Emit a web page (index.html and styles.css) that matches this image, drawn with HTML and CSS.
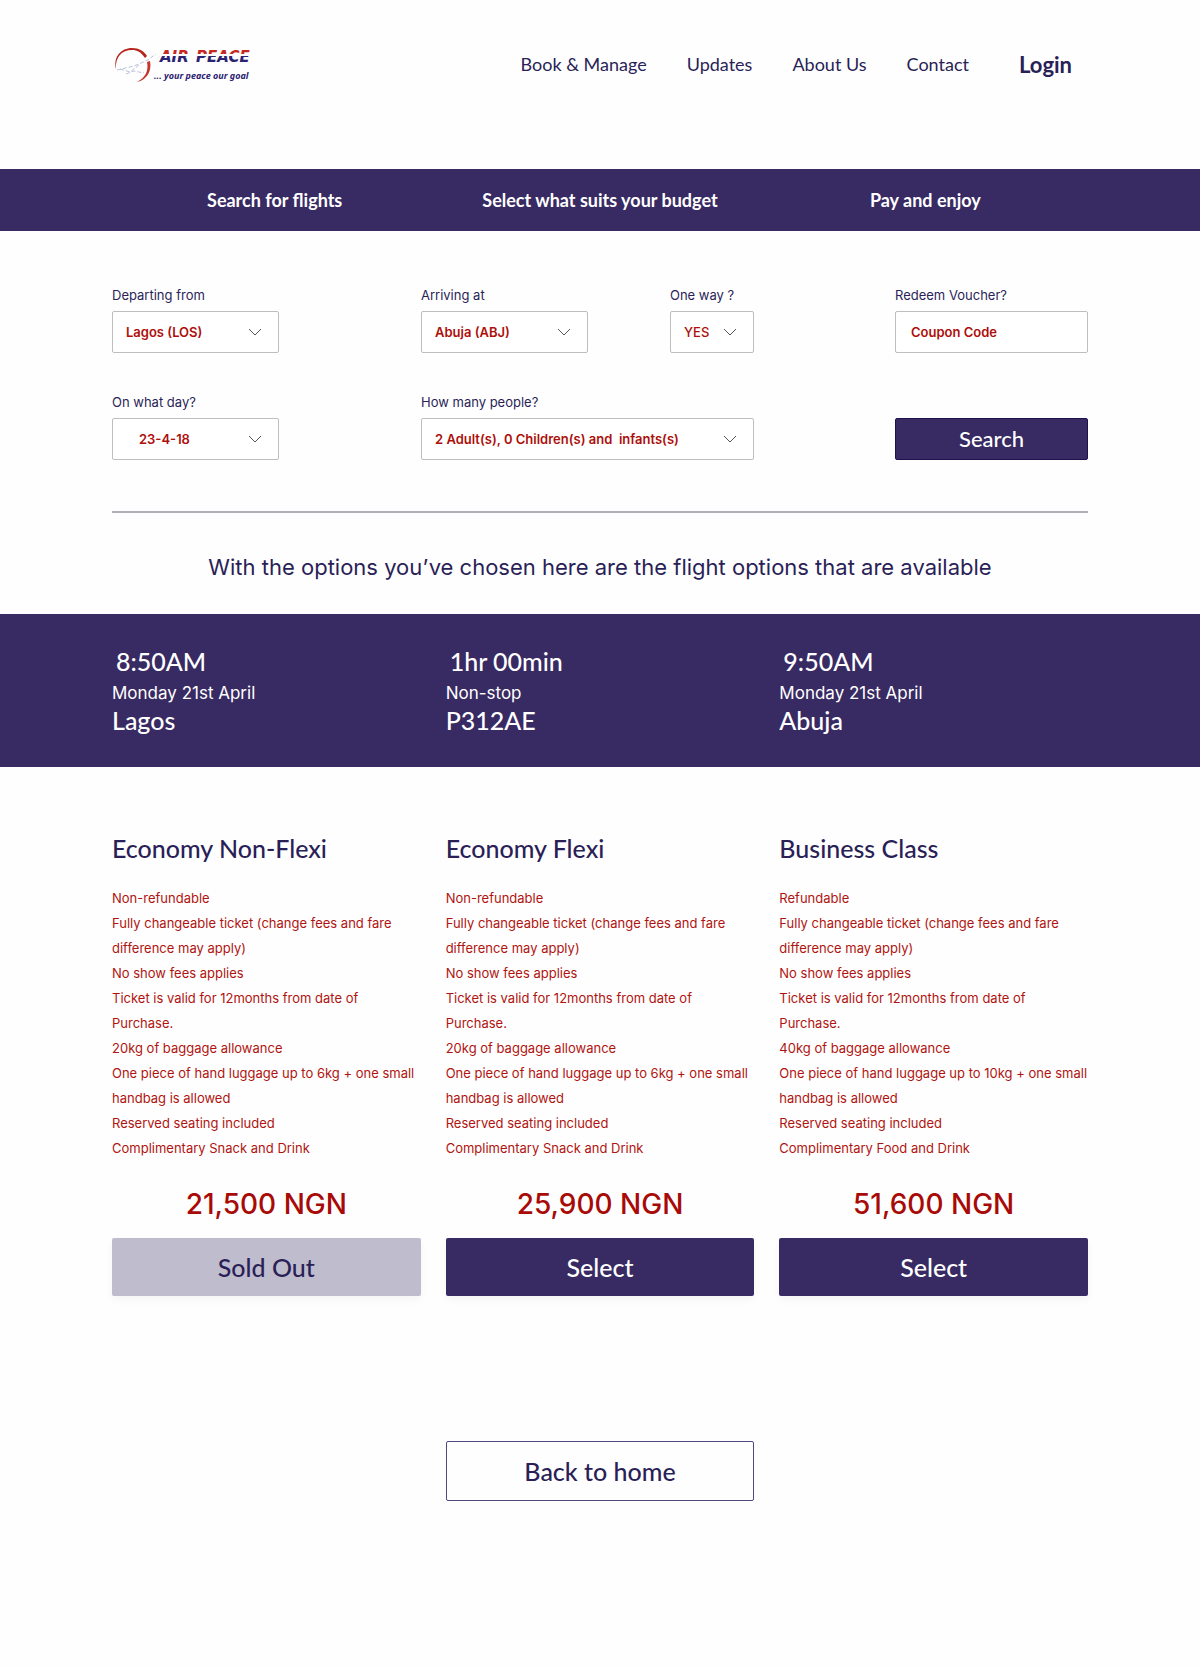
FILE: index.html
```
<!DOCTYPE html>
<html lang="en">
<head>
  <meta charset="UTF-8" />
  <meta name="viewport" content="width=device-width, initial-scale=1.0"/>
  <title>Air Peace - Flight Options</title>
  <link rel="stylesheet" href="styles.css">
</head>
<body>

  <header class="header container">
    <a href="#" class="logo" aria-label="Air Peace">
      <svg width="144" height="42" viewBox="0 0 144 42">
        <defs>
          <linearGradient id="nameFill" gradientUnits="userSpaceOnUse" x1="0" y1="9" x2="0" y2="19">
            <stop offset="0.24" stop-color="#c4281f"/>
            <stop offset="0.24" stop-color="#fff"/>
            <stop offset="0.4" stop-color="#fff"/>
            <stop offset="0.4" stop-color="#2b2270"/>
          </linearGradient>
        </defs>
        <path d="M4 26 C1 14 9 5 20 5 C27 5 32 8 35 13 L33 15 C29 9 25 7 20 7 C10 7 3 14 4 26 Z" fill="#b5261e"/>
        <path d="M38 18 C40 28 35 37 25 39 C33 35 37 28 35 19 Z" fill="#c4342c"/>
        <path d="M5 27 L22 23 L36 17 L44 11 M14 31 L22 28 L32 30 M8 26 L18 29 L27 22" fill="none" stroke="#b9c3dd" stroke-width="1" stroke-dasharray="4 2"/>
        <text class="logo-name" x="48" y="19" fill="url(#nameFill)">AIR</text>
        <text class="logo-name" x="84" y="19" fill="url(#nameFill)">PEACE</text>
        <text class="logo-tagline" x="42" y="36">... your peace our goal</text>
      </svg>
    </a>
    <nav class="nav">
      <a href="#">Book &amp; Manage</a>
      <a href="#">Updates</a>
      <a href="#">About Us</a>
      <a href="#">Contact</a>
      <a href="#" class="login">Login</a>
    </nav>
  </header>

  <div class="steps">
    <div class="container steps-row">
      <span>Search for flights</span>
      <span>Select what suits your budget</span>
      <span>Pay and enjoy</span>
    </div>
  </div>

  <main>
    <form class="search container">
      <div class="field from">
        <label for="from">Departing from</label>
        <div class="select">
          <select id="from" name="from"><option>Lagos (LOS)</option></select>
          <svg class="chevron" viewBox="0 0 14 8"><path d="M1 1 L7 7 L13 1"/></svg>
        </div>
      </div>
      <div class="field to">
        <label for="to">Arriving at</label>
        <div class="select">
          <select id="to" name="to"><option>Abuja (ABJ)</option></select>
          <svg class="chevron" viewBox="0 0 14 8"><path d="M1 1 L7 7 L13 1"/></svg>
        </div>
      </div>
      <div class="field oneway">
        <label for="oneway">One way ?</label>
        <div class="select">
          <select id="oneway" name="oneway"><option>YES</option></select>
          <svg class="chevron" viewBox="0 0 14 8"><path d="M1 1 L7 7 L13 1"/></svg>
        </div>
      </div>
      <div class="field voucher">
        <label for="voucher">Redeem Voucher?</label>
        <input type="text" id="voucher" name="voucher" placeholder="Coupon Code">
      </div>
      <div class="field day">
        <label for="day">On what day?</label>
        <div class="select">
          <select id="day" name="day"><option>23-4-18</option></select>
          <svg class="chevron" viewBox="0 0 14 8"><path d="M1 1 L7 7 L13 1"/></svg>
        </div>
      </div>
      <div class="field people">
        <label for="people">How many people?</label>
        <div class="select">
          <select id="people" name="people"><option>2 Adult(s), 0 Children(s) and &nbsp;infants(s)</option></select>
          <svg class="chevron" viewBox="0 0 14 8"><path d="M1 1 L7 7 L13 1"/></svg>
        </div>
      </div>
      <button type="submit" class="search-btn">Search</button>
    </form>

    <div class="container">
      <hr>
      <p class="intro">With the options you’ve chosen here are the flight options that are available</p>
    </div>

    <section class="flight">
      <div class="container columns">
        <div>
          <p class="big time">8:50AM</p>
          <p class="small">Monday 21st April</p>
          <p class="big">Lagos</p>
        </div>
        <div>
          <p class="big time">1hr 00min</p>
          <p class="small">Non-stop</p>
          <p class="big">P312AE</p>
        </div>
        <div>
          <p class="big time">9:50AM</p>
          <p class="small">Monday 21st April</p>
          <p class="big">Abuja</p>
        </div>
      </div>
    </section>

    <section class="fares container columns">
      <article class="fare">
        <h2>Economy Non-Flexi</h2>
        <ul>
          <li>Non-refundable</li>
          <li>Fully changeable ticket (change fees and fare<br>difference may apply)</li>
          <li>No show fees applies</li>
          <li>Ticket is valid for 12months from date of<br>Purchase.</li>
          <li>20kg of baggage allowance</li>
          <li>One piece of hand luggage up to 6kg + one small<br>handbag is allowed</li>
          <li>Reserved seating included</li>
          <li>Complimentary Snack and Drink</li>
        </ul>
        <p class="price">21,500 NGN</p>
        <button type="button" class="btn" disabled>Sold Out</button>
      </article>
      <article class="fare">
        <h2>Economy Flexi</h2>
        <ul>
          <li>Non-refundable</li>
          <li>Fully changeable ticket (change fees and fare<br>difference may apply)</li>
          <li>No show fees applies</li>
          <li>Ticket is valid for 12months from date of<br>Purchase.</li>
          <li>20kg of baggage allowance</li>
          <li>One piece of hand luggage up to 6kg + one small<br>handbag is allowed</li>
          <li>Reserved seating included</li>
          <li>Complimentary Snack and Drink</li>
        </ul>
        <p class="price">25,900 NGN</p>
        <button type="button" class="btn">Select</button>
      </article>
      <article class="fare">
        <h2>Business Class</h2>
        <ul>
          <li>Refundable</li>
          <li>Fully changeable ticket (change fees and fare<br>difference may apply)</li>
          <li>No show fees applies</li>
          <li>Ticket is valid for 12months from date of<br>Purchase.</li>
          <li>40kg of baggage allowance</li>
          <li>One piece of hand luggage up to 10kg + one small<br>handbag is allowed</li>
          <li>Reserved seating included</li>
          <li>Complimentary Food and Drink</li>
        </ul>
        <p class="price">51,600 NGN</p>
        <button type="button" class="btn">Select</button>
      </article>
    </section>

    <div class="back container columns">
      <a href="#" class="back-btn">Back to home</a>
    </div>
  </main>

</body>
</html>
```
FILE: styles.css
```
* {
  box-sizing: border-box;
}

body {
  margin: 0;
  font-family: Inter, "Liberation Sans", sans-serif;
  font-size: 13px;
  color: #2a1f57;
  background-color: #fefefe;
}

p, h2, ul {
  margin: 0;
  padding: 0;
}

a {
  color: inherit;
  text-decoration: none;
}

.container {
  max-width: 1200px;
  margin: 0 auto;
  padding: 0 112px;
}

.columns {
  display: grid;
  grid-template-columns: repeat(3, 1fr);
  column-gap: 25px;
}

/* header */
.header {
  display: flex;
  align-items: flex-start;
  justify-content: space-between;
  padding-top: 43px;
  padding-bottom: 84px;
}

.logo svg {
  display: block;
}

.logo-name {
  font: italic bold 15px "DejaVu Sans", sans-serif;
}

.logo-tagline {
  font: italic bold 9px "Noto Sans", sans-serif;
  fill: #2b2270;
}

.nav {
  display: flex;
  align-items: center;
  gap: 40px;
  padding-right: 16px;
  height: 42px;
  font-family: Lato, sans-serif;
  font-size: 18px;
}

.login {
  margin-left: 10px;
  font-size: 22px;
  font-weight: bold;
}

/* steps bar */
.steps {
  background-color: #382a62;
  color: #fff;
  font-family: Lato, sans-serif;
  font-size: 18px;
  font-weight: bold;
}

.steps-row {
  display: grid;
  grid-template-columns: repeat(3, 1fr);
  text-align: center;
  line-height: 62px;
}

/* search form */
.search {
  display: grid;
  grid-template-columns: 167fr 142fr 167fr 82fr 84fr 141fr 193fr;
  row-gap: 40px;
  padding-top: 55px;
}

.from, .day {
  grid-column: 1;
}

.to {
  grid-column: 3;
}

.oneway {
  grid-column: 5;
}

.voucher, .search-btn {
  grid-column: 7;
}

.people {
  grid-column: 3 / 6;
}

.field label {
  display: block;
  margin-bottom: 7px;
  line-height: 18px;
  white-space: nowrap;
}

.select {
  position: relative;
}

.select select, .field input {
  display: block;
  width: 100%;
  height: 42px;
  padding: 0 13px;
  border: 1px solid #bdbdc2;
  border-radius: 2px;
  background: #fff;
  color: #ad0f0b;
  font-family: inherit;
  font-size: 13px;
  font-weight: 600;
  appearance: none;
}

.field input {
  padding: 0 15px;
}

.field input::placeholder {
  color: #ad0f0b;
  opacity: 1;
}

.day select {
  padding-left: 26px;
}

.oneway select {
  font-weight: 500;
}

.chevron {
  position: absolute;
  top: 17px;
  right: 17px;
  width: 14px;
  height: 8px;
  fill: none;
  stroke: #555;
  pointer-events: none;
}

.search-btn {
  align-self: end;
  height: 42px;
  padding: 0 0 2px;
  border: 1px solid #21104d;
  border-radius: 2px;
  background-color: #382a62;
  color: #fff;
  font-family: Lato, sans-serif;
  font-size: 22px;
  font-weight: 500;
  cursor: pointer;
}

hr {
  height: 2px;
  margin: 51px 0 0;
  border: none;
  background-color: #afafb5;
}

.intro {
  padding: 38px 0 31px;
  font-size: 22px;
  line-height: 32px;
  text-align: center;
}

/* chosen flight */
.flight {
  padding: 31px 0;
  background-color: #382a62;
  color: #fff;
}

.big {
  font-family: Lato, sans-serif;
  font-size: 25px;
  font-weight: 500;
  line-height: 32px;
}

.time {
  padding-left: 4px;
}

.small {
  margin-top: 3px;
  margin-bottom: -3px;
  font-size: 17px;
  line-height: 27px;
}

/* fares */
.fares {
  padding-top: 65px;
}

.fare h2 {
  font-family: Lato, sans-serif;
  font-size: 25px;
  font-weight: 500;
  line-height: 32px;
}

.fare ul {
  margin-top: 22px;
  list-style: none;
  color: #b01410;
  line-height: 25px;
  white-space: nowrap;
}

.price {
  padding: 24px 0 15px;
  color: #a80b07;
  font-size: 28px;
  font-weight: 500;
  line-height: 38px;
  text-align: center;
}

.btn {
  width: 100%;
  height: 58px;
  border: none;
  border-radius: 2px;
  background-color: #382a62;
  box-shadow: 0 4px 8px rgba(0,0,0,0.04);
  color: #fff;
  font-family: Lato, sans-serif;
  font-size: 25px;
  font-weight: 500;
  cursor: pointer;
}

.btn:disabled {
  background-color: #bfbccd;
  color: #2a1f57;
  cursor: default;
}

.back {
  padding-top: 145px;
  padding-bottom: 166px;
}

.back-btn {
  grid-column: 2;
  border: 1px solid #51477a;
  border-radius: 2px;
  font-family: Lato, sans-serif;
  font-size: 25px;
  font-weight: 500;
  line-height: 58px;
  text-align: center;
}
```
